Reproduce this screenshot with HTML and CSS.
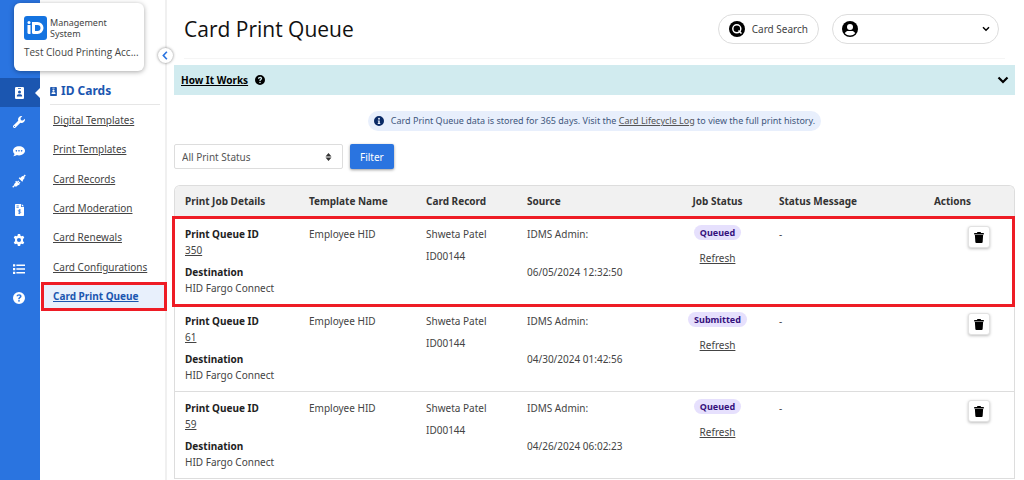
FILE: index.html
```html
<!DOCTYPE html>
<html lang="en">
<head>
    <meta charset="UTF-8">
    <meta name="viewport" content="width=device-width, initial-scale=1.0">
    <title>Card Print Queue</title>
    <link rel="stylesheet" href="styles.css">
</head>
<body>
    <!-- Shared icons -->
    <svg class="sprite" aria-hidden="true">
        <symbol id="icon-badge" viewBox="0 0 12 16">
            <path fill-rule="evenodd" d="M1.500 0h9A1.500 1.500 0 0 1 12 1.500v13a1.500 1.500 0 0 1-1.500 1.500h-9A1.500 1.500 0 0 1 0 14.500v-13A1.500 1.500 0 0 1 1.500 0zM4 1.500v1h4v-1zM6 4.500a2 2 0 1 0 0 4 2 2 0 0 0 0-4zM2.500 12.500h7v-.8c0-1.200-1-2.200-2.200-2.200H4.700c-1.200 0-2.200 1-2.200 2.200z"/>
        </symbol>
        <symbol id="icon-trash" viewBox="0 0 14 16">
            <path d="M0 1.500h4L4.700 0h4.600L10 1.500h4v2H0zM1 4.500h12l-.7 10a1.500 1.500 0 0 1-1.500 1.500H3.200a1.500 1.500 0 0 1-1.500-1.500z"/>
        </symbol>
        <symbol id="icon-question" viewBox="0 0 16 16">
            <path fill-rule="evenodd" d="M8 0a8 8 0 1 1 0 16A8 8 0 0 1 8 0zM4.700 5.800h2C6.800 5 7.300 4.600 8 4.600s1.200.4 1.200 1c0 .6-.3.900-1 1.300-.9.600-1.300 1.200-1.200 2.300v.3h2v-.2c0-.6.200-.9 1-1.400.9-.5 1.400-1.200 1.400-2.300C11.400 4 10 2.900 8.100 2.900c-2 0-3.400 1.100-3.400 2.900zM8 10.600a1.200 1.200 0 1 0 0 2.400 1.200 1.200 0 0 0 0-2.400z"/>
        </symbol>
        <symbol id="icon-chevron" viewBox="0 0 12 8">
            <path d="M1.500 1.500 6 6l4.500-4.500" fill="none" stroke="currentColor" stroke-width="2.200"/>
        </symbol>
    </svg>

    <div class="app">
        <nav class="rail" aria-label="Sections">
            <div class="rail-items">
                <a class="rail-item active" href="#" aria-label="ID Cards"><svg width="9" height="12"><use href="#icon-badge"/></svg></a>
                <a class="rail-item" href="#" aria-label="Tools">
                    <svg width="12" height="12" viewBox="0 0 16 16"><path fill-rule="evenodd" d="M15.800 3.600a4.600 4.600 0 0 1-6 5.500l-6.300 6.300a2 2 0 0 1-2.900-2.900L7 6.200A4.600 4.600 0 0 1 12.400.2L10 2.700l.5 2.800 2.800.5zM2 13.200a.8.8 0 1 0 0 1.600.8.8 0 0 0 0-1.600z"/></svg>
                </a>
                <a class="rail-item" href="#" aria-label="Messages">
                    <svg width="12" height="12" viewBox="0 0 16 16"><path fill-rule="evenodd" d="M8 1.500c4.400 0 8 2.700 8 6.200s-3.600 6.200-8 6.200c-1 0-2-.2-3-.5-1 .8-2.700 1.600-4.800 1.600 1-1 1.600-2.200 1.800-3.100A5.500 5.500 0 0 1 0 7.700c0-3.500 3.600-6.200 8-6.200zM4.500 6.700a1.100 1.100 0 1 0 0 2.200 1.100 1.100 0 0 0 0-2.200zM8 6.700a1.100 1.100 0 1 0 0 2.200 1.100 1.100 0 0 0 0-2.200zM11.500 6.700a1.100 1.100 0 1 0 0 2.200 1.100 1.100 0 0 0 0-2.200z"/></svg>
                </a>
                <a class="rail-item" href="#" aria-label="Integrations">
                    <svg width="14" height="14" viewBox="0 0 16 16">
                        <path d="m8.800 5 2-2c.9-.9 2.100-.9 2.900-.1s.8 2-.1 2.900l-2 2zM5 8.800l-2 2c-.9.900-.9 2.100-.1 2.900s2 .8 2.900-.1l2-2z"/>
                        <path d="m8.200 4.200 4 4M4.200 8.200l4 4M13.200 3.200l2-2M3 13l-2.200 2.200M6.400 9.200l1.300-1.300M7.900 10.700l1.300-1.300" fill="none" stroke="currentColor" stroke-width="1.500"/>
                    </svg>
                </a>
                <a class="rail-item" href="#" aria-label="Billing">
                    <svg width="9" height="12" viewBox="0 0 12 16">
                        <path d="M1 0h7v4h4v11a1 1 0 0 1-1 1H1a1 1 0 0 1-1-1V1a1 1 0 0 1 1-1zM9 0l3 3H9z"/>
                        <path class="cutout" d="M2 2.500h3M2 4.500h3M8 8H5.500c-1.500 0-1.500 2 0 2h1c1.500 0 1.500 2.200 0 2.200H4M6 7v6.500"/>
                    </svg>
                </a>
                <a class="rail-item" href="#" aria-label="Settings">
                    <svg width="12" height="12" viewBox="0 0 16 16"><path fill-rule="evenodd" d="M6.500 0h3l.5 2.300 1.300.7 2.200-.7L15 4.900l-1.700 1.600v3L15 11.100l-1.500 2.600-2.200-.7-1.300.7L9.500 16h-3L6 13.700 4.700 13l-2.200.7L1 11.100l1.700-1.600v-3L1 4.900l1.500-2.600 2.200.7L6 2.300zM8 5.300a2.700 2.700 0 1 0 0 5.400 2.700 2.700 0 0 0 0-5.400z"/></svg>
                </a>
                <a class="rail-item" href="#" aria-label="Lists">
                    <svg width="12" height="12" viewBox="0 0 16 16"><path d="M0 1.500h3v3H0zM4.500 2H16v2H4.500zM0 6.500h3v3H0zM4.500 7H16v2H4.500zM0 11.500h3v3H0zM4.500 12H16v2H4.500z"/></svg>
                </a>
                <a class="rail-item" href="#" aria-label="Help"><svg width="12" height="12"><use href="#icon-question"/></svg></a>
            </div>
        </nav>

        <aside class="sidebar">
            <h2 class="sidebar-title"><svg width="7" height="9"><use href="#icon-badge"/></svg>ID Cards</h2>
            <nav class="menu" aria-label="ID Cards">
                <a href="#">Digital Templates</a>
                <a href="#">Print Templates</a>
                <a href="#">Card Records</a>
                <a href="#">Card Moderation</a>
                <a href="#">Card Renewals</a>
                <a href="#">Card Configurations</a>
                <a class="current" href="#" aria-current="page">Card Print Queue</a>
            </nav>
            <button class="collapse" aria-label="Collapse menu">
                <svg width="6" height="9" viewBox="0 0 8 12"><path d="M6.500 1 1.800 6l4.700 5" fill="none" stroke="currentColor" stroke-width="2.200"/></svg>
            </button>
        </aside>

        <div class="brand">
            <div class="brand-top">
                <svg width="23" height="24" viewBox="0 0 23 24" aria-label="ID">
                    <rect width="23" height="24" rx="3" fill="#1473e0"/>
                    <circle cx="5" cy="6.500" r="1.500" fill="#fff"/>
                    <path d="M3.500 9H6.500v9H5a1.500 1.500 0 0 1-1.500-1.500z" fill="#fff"/>
                    <path fill-rule="evenodd" d="M8 6h5.500a6 6 0 0 1 0 12H9.500A1.500 1.500 0 0 1 8 16.500zM11 9v6h2.500a3 3 0 0 0 0-6z" fill="#fff"/>
                </svg>
                <span>Management<br>System</span>
            </div>
            <p>Test Cloud Printing Acc...</p>
        </div>

        <main class="content">
            <header class="page-header">
                <h1>Card Print Queue</h1>
                <button class="pill">
                    <svg width="16" height="16" viewBox="0 0 16 16">
                        <circle cx="8" cy="8" r="8"/>
                        <circle cx="7.800" cy="7.800" r="4" fill="none" stroke="#fff" stroke-width="1.500"/>
                        <path d="m9.500 9.500 3 3" stroke="#fff" stroke-width="1.500"/>
                    </svg>
                    Card Search
                </button>
                <button class="pill account" aria-label="Account">
                    <svg width="16" height="16" viewBox="0 0 16 16">
                        <circle cx="8" cy="8" r="8"/>
                        <circle cx="8" cy="6" r="3" fill="#fff"/>
                        <path d="M2.800 12.200C3.600 10.600 5 10 6.300 10h3.400c1.300 0 2.700.6 3.500 2.200A6.600 6.600 0 0 1 8 14.500a6.600 6.600 0 0 1-5.200-2.300z" fill="#fff"/>
                    </svg>
                    <svg width="8" height="6"><use href="#icon-chevron"/></svg>
                </button>
            </header>

            <section class="how">
                <a href="#">How It Works</a>
                <svg width="10" height="10"><use href="#icon-question"/></svg>
                <button aria-label="Expand"><svg width="12" height="8"><use href="#icon-chevron"/></svg></button>
            </section>

            <p class="notice">
                <svg width="10" height="10" viewBox="0 0 16 16"><path fill-rule="evenodd" d="M8 0a8 8 0 1 1 0 16A8 8 0 0 1 8 0zM8 2.800a1.500 1.500 0 1 0 0 3 1.500 1.500 0 0 0 0-3zM6 7v1.500h.8v2.700H6v1.600h4v-1.600h-.8V7z"/></svg>
                <span>Card Print Queue data is stored for 365 days. Visit the <a href="#">Card Lifecycle Log</a> to view the full print history.</span>
            </p>

            <form class="filters">
                <div class="select">
                    <select aria-label="Print status">
                        <option>All Print Status</option>
                        <option>Queued</option>
                        <option>Submitted</option>
                    </select>
                    <svg width="7" height="8" viewBox="0 0 6 8"><path d="M3 0l3 3.500H0zM3 8l3-3.500H0z"/></svg>
                </div>
                <button type="button" class="filter-button">Filter</button>
            </form>

            <div class="table-box">
                <table>
                    <thead>
                        <tr>
                            <th class="col-job">Print Job Details</th>
                            <th class="col-template">Template Name</th>
                            <th class="col-record">Card Record</th>
                            <th class="col-source">Source</th>
                            <th class="col-status">Job Status</th>
                            <th>Status Message</th>
                            <th class="col-actions">Actions</th>
                        </tr>
                    </thead>
                    <tbody>
                        <tr class="highlight">
                            <td><b>Print Queue ID</b><a href="#">350</a><b class="next">Destination</b>HID Fargo Connect</td>
                            <td>Employee HID</td>
                            <td>Shweta Patel<div class="next">ID00144</div></td>
                            <td>IDMS Admin:<div class="date">06/05/2024 12:32:50</div></td>
                            <td class="status"><span class="badge">Queued</span><a href="#">Refresh</a></td>
                            <td>-</td>
                            <td class="actions"><button class="delete" aria-label="Delete"><svg width="10" height="11"><use href="#icon-trash"/></svg></button></td>
                        </tr>
                        <tr>
                            <td><b>Print Queue ID</b><a href="#">61</a><b class="next">Destination</b>HID Fargo Connect</td>
                            <td>Employee HID</td>
                            <td>Shweta Patel<div class="next">ID00144</div></td>
                            <td>IDMS Admin:<div class="date">04/30/2024 01:42:56</div></td>
                            <td class="status"><span class="badge">Submitted</span><a href="#">Refresh</a></td>
                            <td>-</td>
                            <td class="actions"><button class="delete" aria-label="Delete"><svg width="10" height="11"><use href="#icon-trash"/></svg></button></td>
                        </tr>
                        <tr>
                            <td><b>Print Queue ID</b><a href="#">59</a><b class="next">Destination</b>HID Fargo Connect</td>
                            <td>Employee HID</td>
                            <td>Shweta Patel<div class="next">ID00144</div></td>
                            <td>IDMS Admin:<div class="date">04/26/2024 06:02:23</div></td>
                            <td class="status"><span class="badge">Queued</span><a href="#">Refresh</a></td>
                            <td>-</td>
                            <td class="actions"><button class="delete" aria-label="Delete"><svg width="10" height="11"><use href="#icon-trash"/></svg></button></td>
                        </tr>
                    </tbody>
                </table>
            </div>
        </main>
    </div>
</body>
</html>
```
FILE: styles.css
```css
* {
    box-sizing: border-box;
}

body {
    margin: 0;
    font-family: "Noto Sans", "Open Sans", sans-serif;
    font-size: 10px;
    line-height: 16px;
    color: #444;
    background: #fff;
}

h1, h2, p {
    margin: 0;
}

a {
    color: inherit;
    text-underline-offset: 1px;
}

svg {
    display: block;
    flex: none;
    fill: currentColor;
}

button, select {
    font: inherit;
    color: inherit;
}

button {
    cursor: pointer;
}

.sprite {
    position: absolute;
    width: 0;
    height: 0;
}

.app {
    display: flex;
    min-height: 100vh;
    position: relative;
}

/* Blue icon rail */
.rail {
    flex: none;
    width: 40px;
    padding-top: 78px;
    background: #2a74e0;
}

.rail-items {
    display: grid;
    grid-template-rows: repeat(8, 1fr);
    height: 235px;
}

.rail-item {
    display: flex;
    align-items: center;
    justify-content: center;
    padding-right: 2px;
    color: #fff;
    position: relative;
}

.rail-item.active {
    background: #1b56b0;
}

.rail-item.active::after {
    content: "";
    position: absolute;
    right: 0;
    border: 5px solid transparent;
    border-left: 0;
    border-right-color: #fff;
}

.cutout {
    fill: none;
    stroke: #2a74e0;
}

/* Section menu */
.sidebar {
    flex: none;
    width: 127px;
    padding-top: 78px;
    border-right: 2px solid #f0f0f0;
    position: relative;
}

.sidebar-title {
    display: flex;
    align-items: center;
    gap: 4px;
    height: 27px;
    margin: 0 5px 0 10px;
    border-bottom: 1px solid #e6e6e6;
    font-size: 12px;
    color: #1b56b0;
}

.menu {
    display: grid;
    grid-template-rows: repeat(7, 1fr);
    height: 206px;
    margin: 0 -2px 0 1px;
}

.menu a {
    display: flex;
    align-items: center;
    padding-left: 12px;
}

.menu .current {
    padding-left: 9px;
    border: 3px solid #ee1c25;
    background: #e8f0fc;
    color: #1b56b0;
    font-weight: bold;
}

.collapse {
    position: absolute;
    top: 48px;
    right: -8px;
    width: 15px;
    height: 15px;
    padding: 0 1px 0 0;
    display: flex;
    align-items: center;
    justify-content: center;
    border: 0;
    border-radius: 50%;
    background: #fff;
    color: #2a74e0;
    box-shadow: 0 0 3px rgba(0, 0, 0, 0.5);
}

/* Account card lies over the rail and the menu */
.brand {
    position: absolute;
    top: 3px;
    left: 14px;
    width: 130px;
    height: 68px;
    padding: 13px 10px 0;
    border-radius: 6px;
    background: #fff;
    box-shadow: 0 1px 5px rgba(0, 0, 0, 0.35);
    white-space: nowrap;
}

.brand-top {
    display: flex;
    align-items: center;
    gap: 3px;
    font-size: 9px;
    line-height: 11px;
}

.brand p {
    margin-top: 4px;
    font-family: "Open Sans", sans-serif;
}

/* Main column */
.content {
    flex: 1;
    min-width: 0;
    padding: 0 9px 0 7px;
}

.page-header {
    display: flex;
    align-items: center;
    gap: 13px;
    height: 59px;
    margin: 0 10px 6px;
    padding-right: 6px;
    border-bottom: 1px solid #f5f5f5;
}

.page-header h1 {
    flex: 1;
    font-family: "Open Sans", sans-serif;
    font-size: 21px;
    font-weight: 400;
    line-height: 28px;
    color: #111;
}

.pill {
    display: flex;
    align-items: center;
    gap: 7px;
    height: 30px;
    padding: 0 10px;
    border: 1px solid #ddd;
    border-radius: 15px;
    background: #fff;
}

.pill svg {
    color: #000;
}

.account {
    width: 167px;
    padding: 0 8px 0 9px;
    justify-content: space-between;
}

.how {
    display: flex;
    align-items: center;
    gap: 7px;
    height: 30px;
    padding: 0 6px 0 7px;
    background: #d1ebef;
    color: #000;
    font-weight: bold;
}

.how button {
    margin-left: auto;
    padding: 0;
    border: 0;
    background: none;
}

.notice {
    display: flex;
    align-items: center;
    gap: 7px;
    width: fit-content;
    height: 20px;
    margin: 16px auto 13px;
    padding: 0 6px;
    border-radius: 10px;
    background: #e8effc;
    color: #41577c;
    font-size: 9px;
}

.notice svg {
    color: #0a2a66;
}

.notice a {
    color: #555;
}

.filters {
    display: flex;
    gap: 7px;
    margin-bottom: 16px;
}

.select {
    display: grid;
    align-items: center;
    width: 169px;
}

.select select,
.select svg {
    grid-area: 1 / 1;
}

.select select {
    appearance: none;
    height: 25px;
    padding: 0 7px;
    border: 1px solid #ddd;
    border-radius: 2px;
    background: #fff;
    color: #555;
}

.select svg {
    justify-self: end;
    margin-right: 11px;
    color: #333;
    pointer-events: none;
}

.filter-button {
    height: 25px;
    padding: 0 10px;
    border: 0;
    border-radius: 2px;
    background: #2a74e0;
    color: #fff;
    box-shadow: 0 1px 3px rgba(0, 0, 0, 0.4);
}

/* Print queue table */
.table-box {
    border: 1px solid #ddd;
    border-bottom: 0;
    border-radius: 6px 6px 0 0;
}

table {
    width: 100%;
    table-layout: fixed;
    border-collapse: separate;
    border-spacing: 0;
}

th, td {
    padding: 8px 0 0 10px;
    text-align: left;
    vertical-align: top;
}

th {
    height: 32px;
    padding-top: 7px;
    background: #f1f1f1;
    color: #333;
}

th:first-child {
    border-top-left-radius: 5px;
}

th:last-child {
    border-top-right-radius: 5px;
}

td {
    height: 87px;
    border-bottom: 1px solid #ddd;
}

td a, td b {
    display: block;
    width: fit-content;
}

td b {
    color: #222;
}

.col-job {
    width: 124px;
}

.col-template {
    width: 117px;
}

.col-record {
    width: 101px;
}

.col-source {
    width: 149px;
}

.col-status {
    width: 103px;
    padding-left: 0;
    text-align: center;
}

.col-actions {
    width: 123px;
    padding-left: 0;
    text-align: center;
}

.next {
    margin-top: 6px;
}

.date {
    margin-top: 22px;
}

.status {
    padding-top: 7px;
    padding-left: 0;
}

.status a {
    margin: 10px auto 0;
}

.badge {
    display: block;
    width: fit-content;
    margin: 0 auto;
    padding: 0 6px;
    border-radius: 8px;
    background: #e6e0fd;
    color: #35107c;
    font-size: 9px;
    font-weight: bold;
    line-height: 15px;
}

.actions {
    padding-right: 24px;
}

.delete {
    display: flex;
    align-items: center;
    justify-content: center;
    width: 22px;
    height: 22px;
    margin-left: auto;
    padding: 0;
    border: 1px solid #e2e2e2;
    border-radius: 3px;
    background: #fff;
    color: #000;
    box-shadow: 0 1px 3px rgba(0, 0, 0, 0.25);
}

.highlight {
    position: relative;
}

/* Red frame round the whole row */
.highlight td:last-child::after {
    content: "";
    position: absolute;
    inset: -2px -1px -2px -3px;
    border: 3px solid #ee1c25;
    pointer-events: none;
}
```
